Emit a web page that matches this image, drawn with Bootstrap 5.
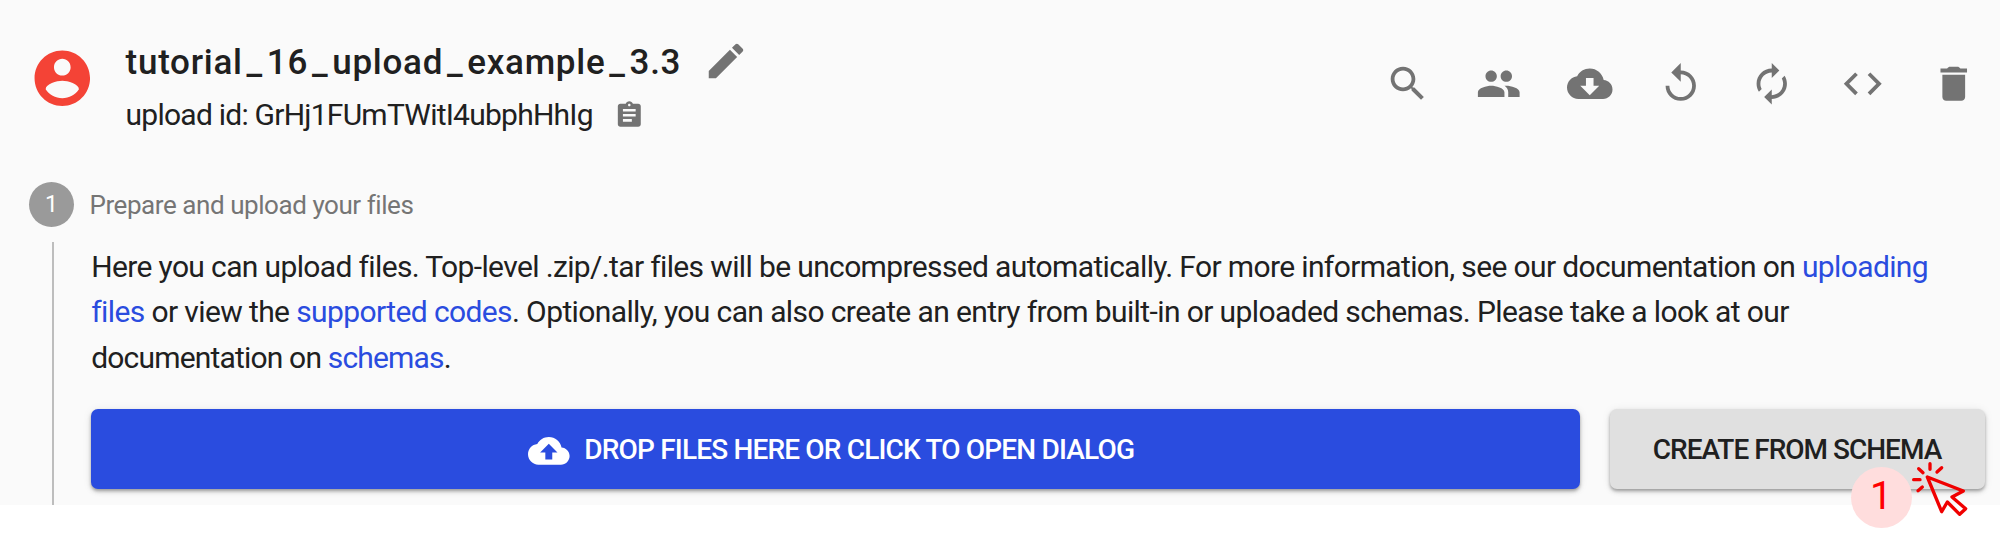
<!DOCTYPE html>
<html lang="en">
<head>
<meta charset="utf-8">
<meta name="viewport" content="width=device-width, initial-scale=1">
<title>Upload – tutorial_16_upload_example_3.3</title>
<link rel="stylesheet" href="https://cdn.jsdelivr.net/npm/bootstrap@5.3.0/dist/css/bootstrap.min.css">
<style>
body{font-family:Roboto,"Open Sans",sans-serif;color:#202020;background:#fff;min-height:548px}
.upload-page{background:#fafafa;height:505px}
.upload-head{height:150px;padding:37px 24px 0 28.7px}
svg{display:block;flex:none;fill:currentColor}
.avatar-icon{width:66.6px;height:66.6px;color:#f44336;margin-top:8px}
.head-text{margin-left:30.3px;padding-top:1px}
.title-text{font-size:35px;font-weight:500;line-height:48px;white-space:nowrap;letter-spacing:.72px;padding-top:1px}
.title-text i{font-style:normal;padding:0 3.9px}
.id-text{font-size:30px;line-height:40px;letter-spacing:-.76px;white-space:nowrap}
.grey-icon{color:#737373}
.pencil{width:46px;height:46px;margin:-3px 0 0 21.5px}
.clip{width:30.6px;height:30.6px;margin-left:21.5px}
.tool-btn{width:91px;height:46px;color:#737373;display:flex;justify-content:center;align-items:center}
.tool-btn svg{width:45.5px;height:45.5px}
.tools{margin:23.3px -23.6px 0 0}
.step-head{height:92px;padding:32px 0 0 29px}
.step-dot{width:45px;height:45px;background:#9a9a9a;color:#fff;font-size:23px;line-height:1}
.step-label{font-size:26px;line-height:47px;letter-spacing:-.44px;color:#757575;margin-left:15.5px}
.step-body{height:263px;margin-left:52px;border-left:2px solid #bdbdbd;padding:2px 15.5px 0 37.2px}
.intro{font-size:30px;line-height:45.3px;white-space:nowrap;height:164.8px;letter-spacing:-.61px}
.intro a{color:#2a4cdf;text-decoration:none}
.line-one{letter-spacing:-.636px}
.line-three{letter-spacing:-.82px}
.act-btn{height:80.5px;border:0;border-radius:7px;font-size:28px;font-weight:500;padding:2.5px 0 0;display:flex;align-items:center;justify-content:center;white-space:nowrap;
box-shadow:0 2px 3px rgba(0,0,0,.25),0 3px 5px rgba(0,0,0,.12),0 1px 10px rgba(0,0,0,.08)}
.drop-btn,.drop-btn:hover{background:#2a4cdf;color:#fff;letter-spacing:-.83px;width:1489px;padding-right:9px}
.drop-btn svg{width:41.6px;height:41.6px;margin-right:14.5px}
.schema-btn,.schema-btn:hover{background:#e0e0e0;color:#202020;letter-spacing:-1px;width:375px}
.call-mark{width:61px;height:61px;left:241px;top:58px;background:#fdd;color:red;font-size:39.5px;line-height:1;padding-bottom:3px}
.click-mark{left:300px;top:51.5px;width:60px;height:60px}
</style>
</head>
<body>
<main class="upload-page">
  <header class="upload-head d-flex align-items-start justify-content-between">
    <div class="d-flex">
      <svg class="avatar-icon" viewBox="0 0 24 24"><path d="M12 2C6.48 2 2 6.48 2 12s4.48 10 10 10 10-4.48 10-10S17.52 2 12 2zm0 3c1.66 0 3 1.34 3 3s-1.340 3-3 3-3-1.340-3-3 1.340-3 3-3zm0 14.200c-2.500 0-4.710-1.280-6-3.220.030-1.990 4-3.080 6-3.080 1.990 0 5.970 1.090 6 3.080-1.290 1.940-3.500 3.220-6 3.220z"/></svg>
      <div class="head-text">
        <div class="d-flex align-items-center">
          <h1 class="title-text mb-0">tutorial<i>_</i>16<i>_</i>upload<i>_</i>example<i>_</i>3.3</h1>
          <svg class="pencil grey-icon" viewBox="0 0 24 24"><path d="M3 17.250V21h3.750L17.810 9.940l-3.750-3.750L3 17.250zM20.710 7.040c.390-.390.390-1.020 0-1.410l-2.340-2.340c-.390-.390-1.020-.390-1.410 0l-1.830 1.830 3.750 3.750 1.830-1.830z"/></svg>
        </div>
        <div class="d-flex align-items-center pt-2">
          <span class="id-text">upload id: GrHj1FUmTWitI4ubphHhIg</span>
          <svg class="clip grey-icon" viewBox="0 0 24 24"><path d="M19 3h-4.180C14.400 1.840 13.300 1 12 1c-1.300 0-2.400.840-2.820 2H5c-1.100 0-2 .900-2 2v14c0 1.100.900 2 2 2h14c1.100 0 2-.900 2-2V5c0-1.100-.900-2-2-2zm-7 0c.550 0 1 .450 1 1s-.450 1-1 1-1-.450-1-1 .450-1 1-1zm2 14H7v-2h7v2zm3-4H7v-2h10v2zm0-4H7V7h10v2z"/></svg>
        </div>
      </div>
    </div>
    <nav class="tools d-flex" aria-label="Upload actions">
      <div class="tool-btn"><svg viewBox="0 0 24 24"><path d="M15.500 14h-.790l-.280-.270C15.410 12.590 16 11.110 16 9.500 16 5.910 13.090 3 9.500 3S3 5.910 3 9.500 5.910 16 9.500 16c1.610 0 3.090-.590 4.230-1.570l.270.280v.790l5 4.990L20.490 19l-4.990-5zm-6 0C7.010 14 5 11.990 5 9.500S7.010 5 9.500 5 14 7.010 14 9.500 11.990 14 9.500 14z"/></svg></div>
      <div class="tool-btn"><svg viewBox="0 0 24 24"><path d="M16 11c1.660 0 2.990-1.340 2.990-3S17.660 5 16 5c-1.660 0-3 1.340-3 3s1.340 3 3 3zm-8 0c1.660 0 2.990-1.340 2.990-3S9.660 5 8 5C6.340 5 5 6.340 5 8s1.340 3 3 3zm0 2c-2.330 0-7 1.170-7 3.500V19h14v-2.500c0-2.330-4.670-3.500-7-3.500zm8 0c-.290 0-.620.020-.970.050 1.160.840 1.970 1.970 1.970 3.450V19h6v-2.500c0-2.330-4.670-3.500-7-3.500z"/></svg></div>
      <div class="tool-btn"><svg viewBox="0 0 24 24"><path d="M19.350 10.040C18.670 6.590 15.640 4 12 4 9.110 4 6.600 5.640 5.350 8.040 2.340 8.360 0 10.910 0 14c0 3.310 2.690 6 6 6h13c2.760 0 5-2.240 5-5 0-2.640-2.050-4.780-4.650-4.960zM17 13l-5 5-5-5h3V9h4v4h3z"/></svg></div>
      <div class="tool-btn"><svg viewBox="0 0 24 24"><path d="M12 5V1L7 6l5 5V7c3.310 0 6 2.690 6 6s-2.690 6-6 6-6-2.690-6-6H4c0 4.420 3.580 8 8 8s8-3.580 8-8-3.580-8-8-8z"/></svg></div>
      <div class="tool-btn"><svg viewBox="0 0 24 24"><path d="M12 6v3l4-4-4-4v3c-4.420 0-8 3.580-8 8 0 1.570.460 3.030 1.240 4.260L6.700 14.800c-.450-.830-.700-1.790-.700-2.800 0-3.310 2.690-6 6-6zm6.760 1.740L17.300 9.200c.440.840.700 1.790.700 2.800 0 3.310-2.690 6-6 6v-3l-4 4 4 4v-3c4.420 0 8-3.580 8-8 0-1.570-.460-3.030-1.240-4.260z"/></svg></div>
      <div class="tool-btn"><svg viewBox="0 0 24 24"><path d="M9.400 16.600L4.800 12l4.600-4.600L8 6l-6 6 6 6 1.400-1.400zm5.200 0l4.600-4.600-4.600-4.600L16 6l6 6-6 6-1.400-1.400z"/></svg></div>
      <div class="tool-btn"><svg viewBox="0 0 24 24"><path d="M6 19c0 1.100.900 2 2 2h8c1.100 0 2-.900 2-2V7.200H6V19zM19 4h-3.500c-.5-.8-1-1-1.500-1h-4c-.5 0-1 .2-1.500 1H5v2h14V4z"/></svg></div>
    </nav>
  </header>

  <section>
    <div class="step-head d-flex align-items-start">
      <span class="step-dot rounded-circle d-flex align-items-center justify-content-center">1</span>
      <span class="step-label">Prepare and upload your files</span>
    </div>
    <div class="step-body">
      <p class="intro mb-0"><span class="line-one">Here you can upload files. Top-level .zip/.tar files will be uncompressed automatically. For more information, see our documentation on <a href="#">uploading</a></span><br><a href="#">files</a> or view the <a href="#">supported codes</a>. Optionally, you can also create an entry from built-in or uploaded schemas. Please take a look at our<br><span class="line-three">documentation on <a href="#">schemas</a>.</span></p>
      <div class="d-flex justify-content-between">
        <button class="btn act-btn drop-btn" type="button"><svg viewBox="0 0 24 24"><path d="M19.350 10.040C18.670 6.590 15.640 4 12 4 9.110 4 6.600 5.640 5.350 8.040 2.340 8.360 0 10.910 0 14c0 3.310 2.690 6 6 6h13c2.760 0 5-2.240 5-5 0-2.640-2.050-4.780-4.650-4.960zM14 13v4h-4v-4H7l5-5 5 5h-3z"/></svg>DROP FILES HERE OR CLICK TO OPEN DIALOG</button>
        <div class="position-relative">
          <button class="btn act-btn schema-btn" type="button">CREATE FROM SCHEMA</button>
          <span class="call-mark position-absolute rounded-circle d-flex align-items-center justify-content-center">1</span>
          <svg class="click-mark position-absolute" viewBox="1050 210 180 180" stroke="#f00000" stroke-width="10" stroke-linejoin="round" stroke-linecap="round"><path fill="none" d="M1102 261L1210 303L1176 321L1217 356L1199 373L1162 336L1145 365Z"/><path fill="none" d="M1110 221V238M1076 236L1089 248M1145 233L1131 246M1061 269H1080M1087 291L1074 302"/></svg>
        </div>
      </div>
    </div>
  </section>
</main>
<script src="https://cdn.jsdelivr.net/npm/bootstrap@5.3.0/dist/js/bootstrap.bundle.min.js"></script>
</body>
</html>
